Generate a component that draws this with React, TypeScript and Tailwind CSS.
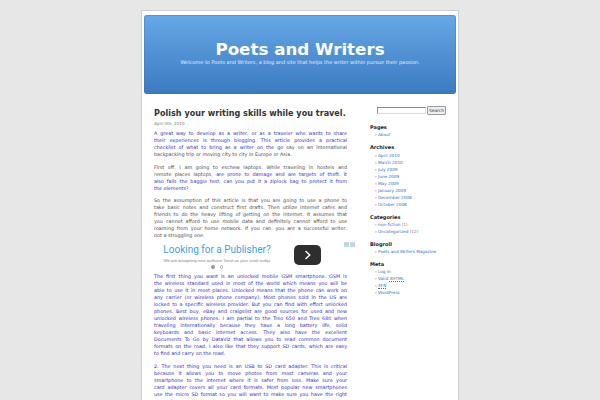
import React from "react";

const B = "text-[#3030bb]";
const G = "text-[#4d4d4d]";

function L({ children, last }: { children: React.ReactNode; last?: boolean }) {
  return (
    <div
      className={
        last
          ? "whitespace-nowrap"
          : "whitespace-nowrap text-justify [text-align-last:justify]"
      }
    >
      {children}
    </div>
  );
}

function SideHead({ children, first }: { children: React.ReactNode; first?: boolean }) {
  return (
    <h2
      className={`${first ? "mt-[9.7px]" : "mt-[6px]"} text-[5px] leading-[6px] font-bold text-[#222222]`}
    >
      {children}
    </h2>
  );
}

function SideList({ items }: { items: React.ReactNode[] }) {
  return (
    <ul className="mt-[1.2px] pl-[4.5px] text-[4.2px] leading-[7px]">
      {items.map((it, i) => (
        <li key={i} className="flex">
          <span className="w-[3.5px] text-[#a0a0a0]">»</span>
          <span>{it}</span>
        </li>
      ))}
    </ul>
  );
}

const lk = "text-[#2f72c4]";

export default function App() {
  return (
    <div className="h-[400px] overflow-hidden bg-[#e7e7e7] pt-[10px] font-['DejaVu_Sans',sans-serif]">
      <div className="mx-auto w-[318px] min-h-[420px] border border-[#cdcdcd] bg-white">
        {/* header */}
        <div className="px-[2px] pt-[4px]">
          <div className="h-[79px] rounded-[3px] bg-gradient-to-b from-[#67a8e6] to-[#3b7ac0] pt-[24px] text-center shadow-[inset_0_0_0_1px_rgba(60,110,170,0.35)]">
            <h1 className="text-[16.7px] leading-[20px] font-bold text-white">Poets and Writers</h1>
            <p className="text-[5px] leading-[7px] text-[#e4effb] whitespace-nowrap">
              Welcome to Poets and Writers, a blog and site that helps the writer within pursue their passion.
            </p>
          </div>
        </div>

        <div className="flex items-start">
          {/* main column */}
          <div className="ml-[12px] w-[193px] pt-[14px]">
            <h2 className="text-[8.1px] leading-[10px] font-bold text-[#333333] whitespace-nowrap">
              Polish your writing skills while you travel.
            </h2>
            <div className="mt-[3px] text-[4.1px] leading-[6px] text-[#777777]">April 5th, 2010</div>

            <div className="mt-[3px] text-[4.85px] leading-[7px]">
              <div>
                <L><span className={B}>A great way to develop as a writer, or as a traveler who wants to share</span></L>
                <L><span className={B}>their experiences is through blogging. This article provides a practical</span></L>
                <L>
                  <span className={B}>checklist of what to bring as a writer on the go</span>
                  <span className={G}> say on an international</span>
                </L>
                <L last><span className={G}>backpacking trip or moving city to city in Europe or Asia.</span></L>
              </div>

              <div className="mt-[5.5px]">
                <L><span className={G}>First off, I am going to eschew laptops. While traveling in hostels and</span></L>
                <L>
                  <span className={G}>remote places laptops, </span>
                  <span className={B}>are prone to damage and are targets of theft. It</span>
                </L>
                <L><span className={B}>also fails the baggie test, can you put it a ziplock bag to protect it from</span></L>
                <L last><span className={B}>the elements?</span></L>
              </div>

              <div className={`mt-[5.5px] ${G}`}>
                <L>So the assumption of this article is that you are going to use a phone to</L>
                <L>take basic notes and construct first drafts. Then utilize internet cafes and</L>
                <L>friends to do the heavy lifting of getting on the internet. It assumes that</L>
                <L>you cannot afford to use mobile data and definitely cannot afford to use</L>
                <L>roaming from your home network. If you can, you are a successful writer,</L>
                <L last>not a struggling one.</L>
              </div>

              {/* ad */}
              <div className="relative flex h-[34px] items-start">
                <div className="w-[126px] pt-[5px] text-center font-['Roboto',sans-serif]">
                  <div className="text-[10px] leading-[12px] text-[#45a1de] whitespace-nowrap">Looking for a Publisher?</div>
                  <div className="mt-[2px] text-[4.3px] leading-[5px] text-[#8a8a8a] whitespace-nowrap">
                    We are accepting new authors! Send us your work today
                  </div>
                  <div className="mt-[2px] flex justify-center gap-[5px]">
                    <span className="h-[3.5px] w-[3.5px] rounded-full bg-[#9a9a9a]" />
                    <span className="h-[3.5px] w-[3.5px] rounded-full border-[0.7px] border-[#aaaaaa] bg-white" />
                  </div>
                </div>
                <div className="ml-[14px] mt-[6px] flex h-[20px] w-[27px] items-center justify-center rounded-[5px] bg-[#2e2e2e]">
                  <svg width="8" height="10" viewBox="0 0 8 10">
                    <path d="M2 1.5 L5.8 5 L2 8.5" fill="none" stroke="white" strokeWidth="1.5" strokeLinecap="round" strokeLinejoin="round" />
                  </svg>
                </div>
                <div className="absolute left-[190px] top-[3px] flex gap-[1px]">
                  <span className="h-[5px] w-[5px] bg-[#c3d7e2]" />
                  <span className="h-[5px] w-[5px] bg-[#c3d7e2]" />
                </div>
              </div>

              <div className={B}>
                <L>The first thing you want is an unlocked mobile GSM smartphone. GSM is</L>
                <L>the wireless standard used in most of the world which means you will be</L>
                <L>able to use it in most places. Unlocked means that the phone can work on</L>
                <L>any carrier (or wireless phone company). Most phones sold in the US are</L>
                <L>locked to a specific wireless provider. But you can find with effort unlocked</L>
                <L>phones. Best buy, eBay and craigslist are good sources for used and new</L>
                <L>unlocked wireless phones. I am partial to the Treo 650 and Treo 680 when</L>
                <L>traveling internationally because they have a long battery life, solid</L>
                <L>keyboards and basic internet access. They also have the excellent</L>
                <L>Documents To Go by DataViz that allows you to read common document</L>
                <L>formats on the road. I also like that they support SD cards, which are easy</L>
                <L last>to find and carry on the road.</L>
              </div>

              <div className={`mt-[5.5px] ${B}`}>
                <L>2. The next thing you need is an USB to SD card adapter. This is critical</L>
                <L>because it allows you to move photos from most cameras and your</L>
                <L>smartphone to the internet where it is safer from loss. Make sure your</L>
                <L>card adapter covers all your card formats. Most popular new smartphones</L>
                <L>use the micro SD format so you will want to make sure you have the right</L>
                <L last>converters.</L>
              </div>
            </div>
          </div>

          {/* sidebar */}
          <div className="ml-[23px] w-[80px] pt-[12px]">
            <div className="ml-[7px] flex items-center">
              <div className="h-[7px] w-[49px] border-[0.7px] border-t-[#8a8a8a] border-l-[#8a8a8a] border-r-[#dcdcdc] border-b-[#dcdcdc] bg-white" />
              <div className="ml-[1px] flex h-[8.5px] w-[19px] items-center justify-center rounded-[1px] border-[0.7px] border-[#9a9a9a] bg-[#efefef] text-[4.3px] leading-[5px] text-[#333333]">
                Search
              </div>
            </div>

            <SideHead first>Pages</SideHead>
            <SideList items={[<span className={lk}>About</span>]} />

            <SideHead>Archives</SideHead>
            <SideList
              items={[
                "April 2010",
                "March 2010",
                "July 2009",
                "June 2009",
                "May 2009",
                "January 2009",
                "December 2008",
                "October 2008",
              ].map((t) => (
                <span className={lk}>{t}</span>
              ))}
            />

            <SideHead>Categories</SideHead>
            <SideList
              items={[
                <span>
                  <span className={lk}>non-fiction</span> <span className="text-[#777777]">(1)</span>
                </span>,
                <span>
                  <span className={lk}>Uncategorized</span> <span className="text-[#777777]">(12)</span>
                </span>,
              ]}
            />

            <SideHead>Blogroll</SideHead>
            <SideList items={[<span className={lk}>Poets and Writers Magazine</span>]} />

            <SideHead>Meta</SideHead>
            <SideList
              items={[
                <span className={lk}>Log in</span>,
                <span className={lk}>
                  Valid <span className="border-b-[0.5px] border-dotted border-[#2f72c4]">XHTML</span>
                </span>,
                <span className={`${lk} border-b-[0.5px] border-dotted border-[#2f72c4]`}>XFN</span>,
                <span className={lk}>WordPress</span>,
              ]}
            />
          </div>
        </div>
      </div>
    </div>
  );
}
